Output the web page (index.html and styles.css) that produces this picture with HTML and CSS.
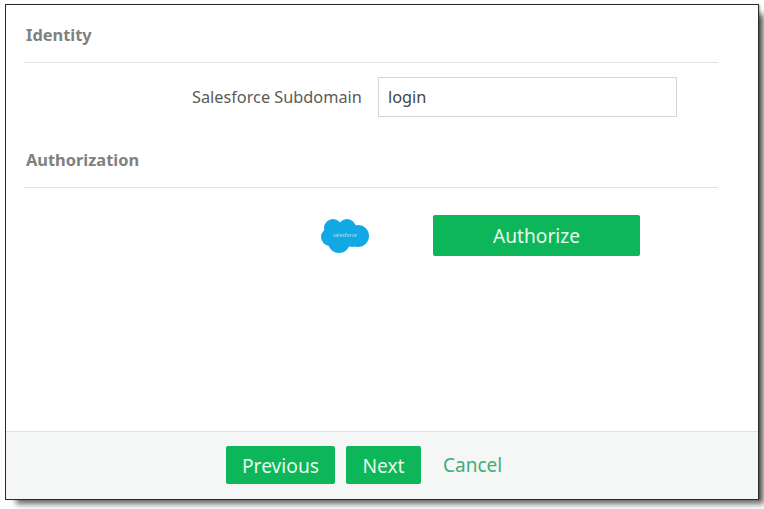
FILE: index.html
```html
<!DOCTYPE html>
<html lang="en">
<head>
<meta charset="utf-8">
<title>Salesforce connection</title>
<link rel="stylesheet" href="styles.css">
</head>
<body>
<div class="dialog">
  <main class="content">
    <section class="identity">
      <h2 class="heading">Identity</h2>
      <div class="field">
        <label class="field-label" for="subdomain">Salesforce Subdomain</label>
        <input class="field-input" id="subdomain" type="text" value="login">
      </div>
    </section>
    <section class="authorization">
      <h2 class="heading">Authorization</h2>
      <div class="auth-row">
        <svg class="logo" viewBox="0 0 50 36" width="50" height="36" aria-hidden="true">
          <g class="logo-cloud">
            <circle cx="13" cy="10" r="9"/>
            <circle cx="27" cy="10" r="9"/>
            <circle cx="38" cy="18" r="11"/>
            <circle cx="10" cy="19" r="9"/>
            <circle cx="19" cy="24" r="11"/>
            <circle cx="32" cy="22" r="7"/>
            <circle cx="24" cy="18" r="10"/>
          </g>
          <text class="logo-text" x="25" y="19" text-anchor="middle">salesforce</text>
        </svg>
        <button class="btn btn-authorize" type="button">Authorize</button>
      </div>
    </section>
  </main>
  <footer class="footer">
    <button class="btn btn-previous" type="button">Previous</button>
    <button class="btn btn-next" type="button">Next</button>
    <a class="cancel" href="#">Cancel</a>
  </footer>
</div>
</body>
</html>
```
FILE: styles.css
```css
* { box-sizing: border-box; }
html, body { margin: 0; padding: 0; height: 100%; background: #fff; overflow: hidden; }
body { font-family: "Noto Sans", "Liberation Sans", sans-serif; padding: 4px 0 0 5px; }
.dialog {
  width: 754px;
  height: 496px;
  border: 1.5px solid #2a2a2a;
  background: #fff;
  display: flex;
  flex-direction: column;
  box-shadow: 2px 0 2px -1px rgba(0,0,0,.35), 8px 7px 6px -3px rgba(0,0,0,.6);
}
.content { flex: 1; padding: 0 40px 0 18px; }
.heading {
  margin: 0;
  font-size: 16.4px;
  line-height: 20px;
  font-weight: 700;
  color: #808080;
  padding: 0 0 17px 2px;
  border-bottom: 1.5px solid #dde3e6;
}
.identity { padding-top: 20px; }
.field { display: flex; align-items: center; margin-top: 14px; padding-left: 168px; }
.field-label { width: 186px; font-size: 16.3px; color: #5a5a5a; white-space: nowrap; }
.field-input {
  width: 299px;
  height: 40px;
  border: 1.5px solid #d5d5d5;
  padding: 0 9px;
  font: 16.3px "Noto Sans", "Liberation Sans", sans-serif;
  color: #444;
  background: #fff;
  outline: none;
}
.authorization { margin-top: 33px; }
.auth-row { display: flex; align-items: center; margin-top: 27px; padding-left: 296px; }
.logo { display: block; filter: blur(.7px); }
.logo-cloud { fill: #12a8e4; }
.logo-text { font: 5px "Noto Sans", sans-serif; fill: #a9e0f7; }
.btn {
  border: 0;
  border-radius: 2px;
  background: #0db659;
  color: #e6f9ec;
  font: 19.2px "Noto Sans", "Liberation Sans", sans-serif;
  padding: 0;
}
.btn-authorize { width: 207px; height: 41px; margin-left: 63px; }
.footer {
  height: 68px;
  flex: none;
  background: #f5f6f6;
  border-top: 1.5px solid #d8e4ea;
  display: flex;
  align-items: center;
  padding: 0 0 1px 220px;
}
.btn-previous { width: 109px; height: 38px; }
.btn-next { width: 75px; height: 38px; margin-left: 11px; }
.cancel { margin-left: 22px; font-size: 19px; color: #3fae78; text-decoration: none; }
```
